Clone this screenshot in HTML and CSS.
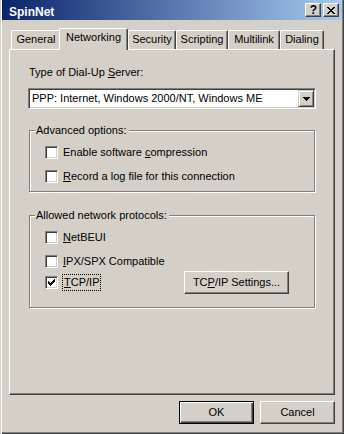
FILE: index.html
```html
<!DOCTYPE html>
<html>
<head>
<meta charset="utf-8">
<title>SpinNet</title>
<link rel="stylesheet" href="styles.css">
</head>
<body>
<div class="window">
  <div class="titlebar">
    <span class="title">SpinNet</span>
    <div class="caption-buttons">
      <div class="cap-btn cap-help">?</div>
      <div class="cap-btn">
        <svg width="8" height="7" viewBox="0 0 8 7" shape-rendering="crispEdges"><path fill="#000" d="M0 0h2v1h-2zM6 0h2v1h-2zM1 1h2v1h-2zM5 1h2v1h-2zM2 2h4v1h-4zM3 3h2v1h-2zM2 4h4v1h-4zM1 5h2v1h-2zM5 5h2v1h-2zM0 6h2v1h-2zM6 6h2v1h-2z"/></svg>
      </div>
    </div>
  </div>
  <div class="client">
    <div class="tabs">
      <div class="tab tab-general">General</div>
      <div class="tab tab-networking tab--active">Networking</div>
      <div class="tab tab-security">Security</div>
      <div class="tab tab-scripting">Scripting</div>
      <div class="tab tab-multilink">Multilink</div>
      <div class="tab tab-dialing">Dialing</div>
    </div>
    <div class="panel">
      <div class="field-label">Type of Dial-Up <u>S</u>erver:</div>
      <div class="combo">
        <span class="combo-text">PPP: Internet, Windows 2000/NT, Windows ME</span>
        <span class="combo-btn">
          <svg width="7" height="4" viewBox="0 0 7 4" shape-rendering="crispEdges"><path fill="#000" d="M0 0h7v1h-7zM1 1h5v1h-5zM2 2h3v1h-3zM3 3h1v1h-1z"/></svg>
        </span>
      </div>
      <div class="group group-advanced">
        <span class="group-label">Advanced options:</span>
        <div class="check-row">
          <span class="checkbox"></span>
          <span class="check-label">Enable software <u>c</u>ompression</span>
        </div>
        <div class="check-row row-gap">
          <span class="checkbox"></span>
          <span class="check-label"><u>R</u>ecord a log file for this connection</span>
        </div>
      </div>
      <div class="group group-protocols">
        <span class="group-label">Allowed network protocols:</span>
        <div class="check-row">
          <span class="checkbox"></span>
          <span class="check-label"><u>N</u>etBEUI</span>
        </div>
        <div class="check-row row-gap">
          <span class="checkbox"></span>
          <span class="check-label"><u>I</u>PX/SPX Compatible</span>
        </div>
        <div class="check-row row-tcp">
          <span class="checkbox">
            <svg width="7" height="7" viewBox="0 0 7 7" shape-rendering="crispEdges"><path fill="#000" d="M6 0h1v1h-1zM5 1h2v1h-2zM0 2h1v1h-1zM4 2h3v1h-3zM0 3h2v1h-2zM3 3h3v1h-3zM0 4h5v1h-5zM1 5h3v1h-3zM2 6h1v1h-1z"/></svg>
          </span>
          <span class="check-label focus"><u>T</u>CP/IP</span>
          <div class="btn btn-settings">TC<u>P</u>/IP Settings...</div>
        </div>
      </div>
    </div>
    <div class="footer">
      <div class="btn btn--default">OK</div>
      <div class="btn">Cancel</div>
    </div>
  </div>
</div>
</body>
</html>
```

FILE: styles.css
```css
* { box-sizing: border-box; }

html, body {
  margin: 0;
  padding: 0;
  background: #d4d0c8;
}

body {
  font-family: "Liberation Sans", Arial, sans-serif;
  font-size: 11px;
  line-height: 13px;
  color: #000;
}

.window {
  width: 344px;
  height: 434px;
  padding: 0 2px 2px 2px;
  background: #d4d0c8;
  box-shadow: inset 1px 0 #d4d0c8, inset 2px 0 #fff,
              inset -1px -1px #404040, inset -2px -2px #808080;
  display: flex;
  flex-direction: column;
}

/* ---------- title bar ---------- */
.titlebar {
  height: 20px;
  flex: none;
  display: flex;
  align-items: center;
  padding: 0 3px 0 7px;
  background: linear-gradient(to right, #0a246a, #a6caf0);
}

.title {
  color: #fff;
  font-weight: bold;
  font-size: 12px;
  line-height: 14px;
  padding-top: 3px;
}

.caption-buttons {
  margin-left: auto;
  display: flex;
  gap: 2px;
}

.cap-btn {
  width: 16px;
  height: 14px;
  display: flex;
  align-items: center;
  justify-content: center;
  background: #d4d0c8;
  border: 1px solid;
  border-color: #fff #404040 #404040 #fff;
  box-shadow: inset -1px -1px #808080;
}

.cap-help {
  font-weight: bold;
  font-size: 12px;
  line-height: 12px;
  padding-left: 1px;
}

/* ---------- client ---------- */
.client {
  padding: 0 7px;
  display: flex;
  flex-direction: column;
}

.tabs {
  margin-top: 8px;
  margin-left: 2px;
  height: 21px;
  display: flex;
  align-items: flex-end;
}

.tab {
  height: 19px;
  padding-top: 2px;
  text-align: center;
  background: #d4d0c8;
  border-top: 1px solid #fff;
  border-left: 1px solid #fff;
  border-right: 1px solid #404040;
  border-top-left-radius: 2px;
  border-top-right-radius: 2px;
  box-shadow: inset -1px 0 #808080;
  white-space: nowrap;
}

.tab--active {
  height: 22px;
  margin-bottom: -1px;
  margin-left: -2px;
  position: relative;
  z-index: 1;
}

.tab-general { width: 50px; }
.tab-networking { width: 69px; }
.tab-security { width: 48px; }
.tab-scripting { width: 52px; }
.tab-multilink { width: 52px; }
.tab-dialing { width: 44px; }

.panel {
  width: 326px;
  height: 346px;
  border: 1px solid;
  border-color: #fff #404040 #404040 #fff;
  box-shadow: inset -1px -1px #808080;
  padding: 16px 0 0 18px;
  display: flex;
  flex-direction: column;
  align-items: flex-start;
}

.field-label {
  margin-left: 1px;
}

u { text-decoration: underline; }

/* ---------- combo box ---------- */
.combo {
  margin-top: 9px;
  width: 288px;
  height: 21px;
  background: #fff;
  border: 1px solid;
  border-color: #808080 #fff #fff #808080;
  box-shadow: inset 1px 1px #404040, inset -1px -1px #d4d0c8;
  padding: 1px 1px 1px 3px;
  display: flex;
  align-items: center;
}

.combo-text {
  white-space: nowrap;
}

.combo-btn {
  margin-left: auto;
  width: 16px;
  height: 17px;
  display: flex;
  align-items: center;
  justify-content: center;
  background: #d4d0c8;
  border: 1px solid;
  border-color: #d4d0c8 #404040 #404040 #d4d0c8;
  box-shadow: inset 1px 1px #fff, inset -1px -1px #808080;
}

/* ---------- group boxes ---------- */
.group {
  position: relative;
  margin-left: 1px;
  width: 286px;
  border: 1px solid #808080;
  box-shadow: inset 1px 1px #fff, 1px 1px 0 #fff;
  padding: 15px 0 0 15px;
}

.group-advanced {
  margin-top: 21px;
  height: 62px;
}

.group-protocols {
  margin-top: 23px;
  height: 93px;
}

.group-label {
  position: absolute;
  top: -7px;
  left: 5px;
  padding: 0 2px 0 1px;
  background: #d4d0c8;
  white-space: nowrap;
}

.check-row {
  display: flex;
  align-items: center;
  gap: 5px;
  height: 13px;
}

.row-gap { margin-top: 11px; }

.row-tcp {
  margin-top: 3px;
  height: 23px;
  padding-right: 25px;
}

.checkbox {
  flex: none;
  width: 13px;
  height: 13px;
  background: #fff;
  border: 1px solid;
  border-color: #808080 #fff #fff #808080;
  box-shadow: inset 1px 1px #404040, inset -1px -1px #d4d0c8;
  display: flex;
  align-items: center;
  justify-content: center;
}

.check-label {
  white-space: nowrap;
}

.focus {
  margin-left: -1px;
  padding: 1px 1px;
  border: 1px dotted #000;
}

/* ---------- buttons ---------- */
.btn {
  width: 75px;
  height: 23px;
  display: flex;
  align-items: center;
  justify-content: center;
  background: #d4d0c8;
  border: 1px solid;
  border-color: #fff #404040 #404040 #fff;
  box-shadow: inset -1px -1px #808080;
  white-space: nowrap;
}

.btn-settings {
  margin-left: auto;
  width: 105px;
}

.btn--default {
  border: 1px solid #000;
  box-shadow: inset 1px 1px #fff, inset -1px -1px #404040, inset -2px -2px #808080;
}

.footer {
  margin-top: 6px;
  display: flex;
  justify-content: flex-end;
  gap: 6px;
}
```
